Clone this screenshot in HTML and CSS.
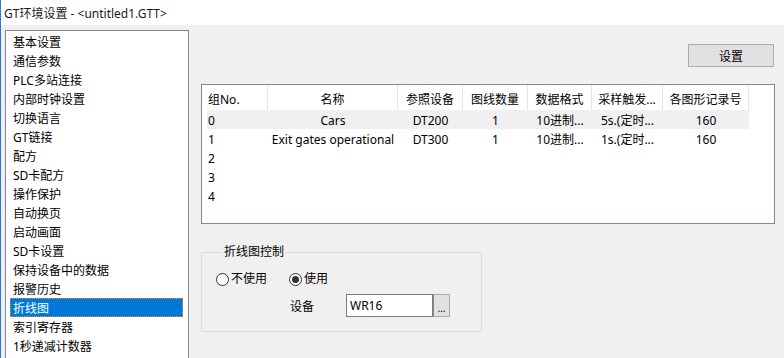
FILE: index.html
```html
<!DOCTYPE html>
<html lang="zh-CN">
<head>
  <meta charset="UTF-8">
  <title>GT环境设置</title>
  <link rel="stylesheet" href="styles.css">
</head>
<body>

<div class="window">
  <div class="titlebar">GT环境设置 - &lt;untitled1.GTT&gt;</div>

  <div class="content">
    <ul class="nav">
      <li>基本设置</li>
      <li>通信参数</li>
      <li>PLC多站连接</li>
      <li>内部时钟设置</li>
      <li>切换语言</li>
      <li>GT链接</li>
      <li>配方</li>
      <li>SD卡配方</li>
      <li>操作保护</li>
      <li>自动换页</li>
      <li>启动画面</li>
      <li>SD卡设置</li>
      <li>保持设备中的数据</li>
      <li>报警历史</li>
      <li class="selected">折线图</li>
      <li>索引寄存器</li>
      <li>1秒递减计数器</li>
    </ul>

    <div class="pane">
      <div class="toolbar">
        <button class="btn">设置</button>
      </div>

      <div class="table">
        <div class="row head">
          <span class="left">组No.</span>
          <span>名称</span>
          <span>参照设备</span>
          <span>图线数量</span>
          <span>数据格式</span>
          <span>采样触发...</span>
          <span>各图形记录号</span>
        </div>
        <div class="row alt">
          <span class="left">0</span>
          <span>Cars</span>
          <span>DT200</span>
          <span>1</span>
          <span>10进制...</span>
          <span>5s.(定时...</span>
          <span>160</span>
        </div>
        <div class="row">
          <span class="left">1</span>
          <span>Exit gates operational</span>
          <span>DT300</span>
          <span>1</span>
          <span>10进制...</span>
          <span>1s.(定时...</span>
          <span>160</span>
        </div>
        <div class="row"><span class="left">2</span></div>
        <div class="row"><span class="left">3</span></div>
        <div class="row"><span class="left">4</span></div>
      </div>

      <fieldset class="group">
        <legend>折线图控制</legend>
        <div class="radios">
          <label class="radio"><i class="dot"></i>不使用</label>
          <label class="radio on"><i class="dot"></i>使用</label>
        </div>
        <div class="device">
          <span class="device-label">设备</span>
          <span class="input">WR16</span>
          <span class="browse">...</span>
        </div>
      </fieldset>
    </div>
  </div>
</div>

</body>
</html>
```

FILE: styles.css
```css
* {
  box-sizing: border-box;
}

body {
  margin: 0;
  font-family: "Noto Sans", "Noto Sans CJK SC", sans-serif;
  font-size: 12px;
  color: #000;
  background-color: #f0f0f0;
}

.window {
  height: 358px;
  overflow: hidden;
  border-left: 1px solid #2b79d0;
  background-color: #f0f0f0;
}

.titlebar {
  height: 25px;
  line-height: 27px;
  padding-left: 3px;
  background-color: #fff;
  color: #1a1a1a;
}

.content {
  display: flex;
  padding: 5px 0 0 4px;
}

/* left list */
.nav {
  list-style: none;
  margin: 0;
  padding: 1px 0 0 0;
  width: 184px;
  height: 340px;
  flex-shrink: 0;
  background-color: #fff;
  border: 1px solid #828790;
  border-bottom: none;
}

.nav li {
  height: 19px;
  line-height: 21px;
  margin: 0 5px 0 4px;
  padding-left: 3px;
  white-space: nowrap;
}

.nav li.selected {
  background-color: #0078d7;
  color: #fff;
  outline: 1px dotted #f28c28;
  outline-offset: -1px;
}

/* right side */
.pane {
  flex: 1;
  padding: 14px 9px 0 12px;
}

.toolbar {
  display: flex;
  justify-content: flex-end;
  padding-right: 1px;
}

.btn {
  width: 86px;
  height: 23px;
  padding: 0;
  font: inherit;
  background-color: #e1e1e1;
  border: 1px solid #adadad;
  color: #000;
}

.table {
  margin-top: 17px;
  height: 140px;
  padding: 0 0 0 5px;
  background-color: #fff;
  border: 1px solid #828790;
}

.row {
  display: grid;
  grid-template-columns: 61px 130px 65px 65px 64px 71px 86px;
  height: 19px;
  line-height: 21px;
  width: 542px;
}

.row span {
  text-align: center;
  white-space: nowrap;
  overflow: hidden;
}

.row span.left {
  text-align: left;
  padding-left: 1px;
}

.row.head {
  height: 25px;
  line-height: 29px;
}

.row.head span {
  border-right: 1px solid #e5e5e5;
}

.row.alt {
  background-color: #f0f0f0;
}

/* group box */
.group {
  width: 281px;
  margin: 20px 0 0 0;
  padding: 0 0 14px 14px;
  border: 1px solid #dcdcdc;
}

.group legend {
  margin-left: 6px;
  padding: 0 2px;
  line-height: 16px;
}

.radios {
  display: flex;
  gap: 22px;
  margin-top: 11px;
  line-height: 16px;
}

.radio {
  display: flex;
  align-items: center;
  gap: 2px;
}

.dot {
  width: 13px;
  height: 13px;
  border: 1px solid #333;
  border-radius: 50%;
  background-color: #fff;
  display: flex;
  align-items: center;
  justify-content: center;
}

.radio.on .dot::after {
  content: "";
  width: 7px;
  height: 7px;
  border-radius: 50%;
  background-color: #333;
}

.device {
  display: flex;
  align-items: center;
  margin-top: 7px;
  padding-left: 74px;
}

.device-label {
  width: 56px;
}

.input {
  width: 87px;
  height: 23px;
  line-height: 22px;
  padding-left: 3px;
  background-color: #fff;
  border: 1px solid #7a7a7a;
}

.browse {
  width: 17px;
  height: 23px;
  line-height: 26px;
  text-align: center;
  font-size: 10px;
  background-color: #e1e1e1;
  border: 1px solid #adadad;
  border-left: 1px solid #888;
}
```
